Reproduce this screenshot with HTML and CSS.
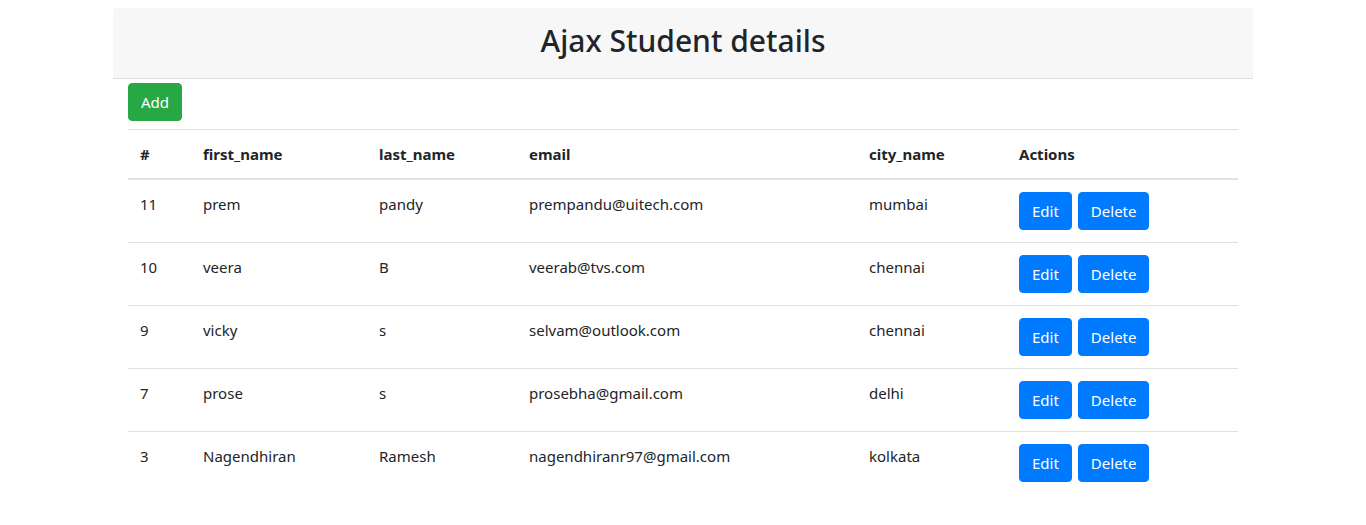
FILE: index.html
```html
<!DOCTYPE html>
<html>
<head>
<meta charset="utf-8">
<title>Ajax Student details</title>
<link rel="stylesheet" href="styles.css">
</head>
<body>
<div class="container">
  <div class="card">
    <div class="card-header">
      <h2 class="title">Ajax Student details</h2>
    </div>
    <div class="card-body">
      <button class="btn btn-success add-btn">Add</button>
      <table class="table">
        <thead>
          <tr>
            <th class="c-id">#</th>
            <th class="c-first">first_name</th>
            <th class="c-last">last_name</th>
            <th class="c-email">email</th>
            <th class="c-city">city_name</th>
            <th class="c-act">Actions</th>
          </tr>
        </thead>
        <tbody>
          <tr><td>11</td><td>prem</td><td>pandy</td><td>prempandu@uitech.com</td><td>mumbai</td><td class="actions"><button class="btn btn-primary">Edit</button><button class="btn btn-primary">Delete</button></td></tr>
          <tr><td>10</td><td>veera</td><td>B</td><td>veerab@tvs.com</td><td>chennai</td><td class="actions"><button class="btn btn-primary">Edit</button><button class="btn btn-primary">Delete</button></td></tr>
          <tr><td>9</td><td>vicky</td><td>s</td><td>selvam@outlook.com</td><td>chennai</td><td class="actions"><button class="btn btn-primary">Edit</button><button class="btn btn-primary">Delete</button></td></tr>
          <tr><td>7</td><td>prose</td><td>s</td><td>prosebha@gmail.com</td><td>delhi</td><td class="actions"><button class="btn btn-primary">Edit</button><button class="btn btn-primary">Delete</button></td></tr>
          <tr><td>3</td><td>Nagendhiran</td><td>Ramesh</td><td>nagendhiranr97@gmail.com</td><td>kolkata</td><td class="actions"><button class="btn btn-primary">Edit</button><button class="btn btn-primary">Delete</button></td></tr>
        </tbody>
      </table>
    </div>
  </div>
</div>
</body>
</html>
```
FILE: styles.css
```css
* { box-sizing: border-box; }
html, body { margin: 0; padding: 0; }
body {
  font-family: "Noto Sans", "Open Sans", sans-serif;
  font-size: 15px;
  line-height: 24px;
  color: #212529;
  background: #fff;
  padding-top: 8px;
}
.container {
  width: 1140px;
  margin: 0 auto;
}
.card {
  border-radius: 4px;
}
.card-header {
  background: #f7f7f7;
  border-bottom: 1px solid #dfdfdf;
  padding: 14px 20px 10px;
  border-radius: 4px 4px 0 0;
  text-align: center;
}
.title {
  margin: 0 0 8px;
  font-size: 30px;
  font-weight: 500;
  line-height: 38px;
}
.card-body {
  padding: 4px 15px 0;
}
.btn {
  display: inline-block;
  font-family: inherit;
  font-size: 15px;
  line-height: 24px;
  height: 38px;
  padding: 6px 12px;
  border: 1px solid transparent;
  border-radius: 4px;
  color: #fff;
  cursor: pointer;
  vertical-align: middle;
}
.btn-success { background: #28a745; border-color: #28a745; }
.btn-primary { background: #007bff; border-color: #007bff; }
.add-btn { display: block; margin-bottom: 8px; }
.actions .btn + .btn { margin-left: 6px; }
.table {
  width: 1110px;
  border-collapse: collapse;
  table-layout: fixed;
}
.table th, .table td {
  padding: 12px;
  text-align: left;
  vertical-align: top;
  border-top: 1px solid #dee2e6;
}
.table th { font-weight: 700; }
.table thead th { border-bottom: 2px solid #dee2e6; }
.c-id { width: 63px; }
.c-first { width: 176px; }
.c-last { width: 150px; }
.c-email { width: 340px; }
.c-city { width: 150px; }
.c-act { width: 231px; }
```
